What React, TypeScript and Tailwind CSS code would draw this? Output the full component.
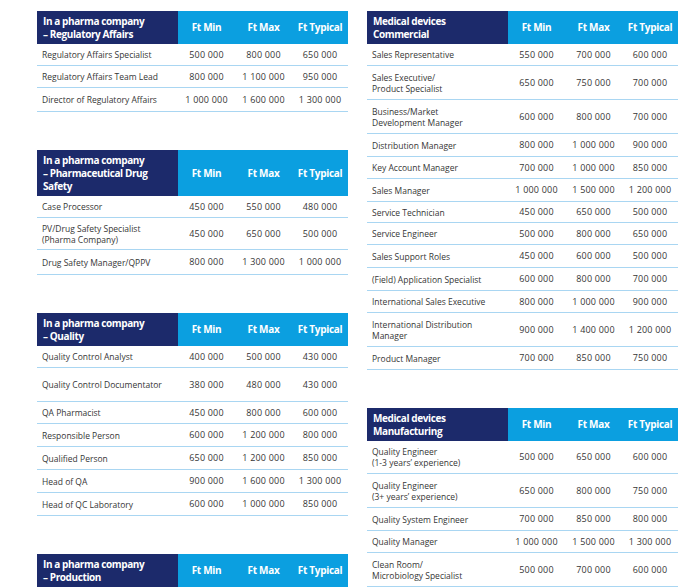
import React from "react";

type Row = { name: string[]; min: string; max: string; typ: string; h: string };
type Table = { title: string[]; hh: string; rows: Row[] };

const r = (name: string[], min: string, max: string, typ: string, h = "h-[22px]"): Row => ({ name, min, max, typ, h });

const regulatory: Table = {
  title: ["In a pharma company", "– Regulatory Affairs"],
  hh: "h-[33px]",
  rows: [
    r(["Regulatory Affairs Specialist"], "500 000", "800 000", "650 000"),
    r(["Regulatory Affairs Team Lead"], "800 000", "1 100 000", "950 000"),
    r(["Director of Regulatory Affairs"], "1 000 000", "1 600 000", "1 300 000", "h-[24px]"),
  ],
};

const drug: Table = {
  title: ["In a pharma company", "– Pharmaceutical Drug", "Safety"],
  hh: "h-[46px]",
  rows: [
    r(["Case Processor"], "450 000", "550 000", "480 000"),
    r(["PV/Drug Safety Specialist", "(Pharma Company)"], "450 000", "650 000", "500 000", "h-[32px]"),
    r(["Drug Safety Manager/QPPV"], "800 000", "1 300 000", "1 000 000", "h-[25px]"),
  ],
};

const quality: Table = {
  title: ["In a pharma company", "– Quality"],
  hh: "h-[33px]",
  rows: [
    r(["Quality Control Analyst"], "400 000", "500 000", "430 000"),
    r(["Quality Control Documentator"], "380 000", "480 000", "430 000", "h-[34px]"),
    r(["QA Pharmacist"], "450 000", "800 000", "600 000"),
    r(["Responsible Person"], "600 000", "1 200 000", "800 000", "h-[23px]"),
    r(["Qualified Person"], "650 000", "1 200 000", "850 000", "h-[23px]"),
    r(["Head of QA"], "900 000", "1 600 000", "1 300 000", "h-[23px]"),
    r(["Head of QC Laboratory"], "600 000", "1 000 000", "850 000", "h-[23px]"),
  ],
};

const production: Table = {
  title: ["In a pharma company", "– Production"],
  hh: "h-[33px]",
  rows: [],
};

const commercial: Table = {
  title: ["Medical devices", "Commercial"],
  hh: "h-[33px]",
  rows: [
    r(["Sales Representative"], "550 000", "700 000", "600 000"),
    r(["Sales Executive/", "Product Specialist"], "650 000", "750 000", "700 000", "h-[34px]"),
    r(["Business/Market", "Development Manager"], "600 000", "800 000", "700 000", "h-[34px]"),
    r(["Distribution Manager"], "800 000", "1 000 000", "900 000", "h-[23px]"),
    r(["Key Account Manager"], "700 000", "1 000 000", "850 000"),
    r(["Sales Manager"], "1 000 000", "1 500 000", "1 200 000", "h-[23px]"),
    r(["Service Technician"], "450 000", "650 000", "500 000", "h-[21px]"),
    r(["Service Engineer"], "500 000", "800 000", "650 000"),
    r(["Sales Support Roles"], "450 000", "600 000", "500 000", "h-[23px]"),
    r(["(Field) Application Specialist"], "600 000", "800 000", "700 000", "h-[23px]"),
    r(["International Sales Executive"], "800 000", "1 000 000", "900 000"),
    r(["International Distribution", "Manager"], "900 000", "1 400 000", "1 200 000", "h-[34px]"),
    r(["Product Manager"], "700 000", "850 000", "750 000", "h-[23px]"),
  ],
};

const manufacturing: Table = {
  title: ["Medical devices", "Manufacturing"],
  hh: "h-[33px]",
  rows: [
    r(["Quality Engineer", "(1-3 years’ experience)"], "500 000", "650 000", "600 000", "h-[33px]"),
    r(["Quality Engineer", "(3+ years’ experience)"], "650 000", "800 000", "750 000", "h-[34px]"),
    r(["Quality System Engineer"], "700 000", "850 000", "800 000", "h-[23px]"),
    r(["Quality Manager"], "1 000 000", "1 500 000", "1 300 000"),
    r(["Clean Room/", "Microbiology Specialist"], "500 000", "700 000", "600 000", "h-[34px]"),
  ],
};

function SalaryTable({ t }: { t: Table }) {
  return (
    <div className="w-[311px] shrink-0">
      <div className={`grid grid-cols-[141px_57px_57px_56px] ${t.hh}`}>
        <div className="bg-[#1c2a6b] flex flex-col justify-center pl-[6px] text-white font-bold text-[10px] tracking-[-0.4px] leading-[13px]">
          {t.title.map((l, i) => (
            <div key={i}>{l}</div>
          ))}
        </div>
        <div className="bg-[#0b9fe0] flex items-center justify-center text-white font-bold text-[10px] tracking-[-0.3px]">Ft Min</div>
        <div className="bg-[#0b9fe0] flex items-center justify-center text-white font-bold text-[10px] tracking-[-0.3px]">Ft Max</div>
        <div className="bg-[#0b9fe0] flex items-center justify-center text-white font-bold text-[10px] tracking-[-0.3px]">Ft Typical</div>
      </div>
      {t.rows.map((row, i) => (
        <div
          key={i}
          className={`grid grid-cols-[141px_57px_57px_56px] border-b border-[#a9d6f2] text-[#363636] text-[8.5px] ${row.h}`}
        >
          <div className="flex flex-col justify-center pl-[5px] leading-[11px]">
            {row.name.map((l, j) => (
              <div key={j}>{l}</div>
            ))}
          </div>
          <div className="flex items-center justify-center text-[9px] tracking-[0.2px]">{row.min}</div>
          <div className="flex items-center justify-center text-[9px] tracking-[0.2px]">{row.max}</div>
          <div className="flex items-center justify-center text-[9px] tracking-[0.2px]">{row.typ}</div>
        </div>
      ))}
    </div>
  );
}

export default function App() {
  return (
    <div
      className="w-[686px] h-[588px] overflow-hidden bg-white flex gap-[19px] pl-[37px] pt-[11px]"
      style={{ fontFamily: '"Open Sans", "Noto Sans", sans-serif' }}
    >
      <div className="flex flex-col gap-[38px]">
        <SalaryTable t={regulatory} />
        <SalaryTable t={drug} />
        <SalaryTable t={quality} />
        <SalaryTable t={production} />
      </div>
      <div className="flex flex-col gap-[38px]">
        <SalaryTable t={commercial} />
        <SalaryTable t={manufacturing} />
      </div>
    </div>
  );
}
